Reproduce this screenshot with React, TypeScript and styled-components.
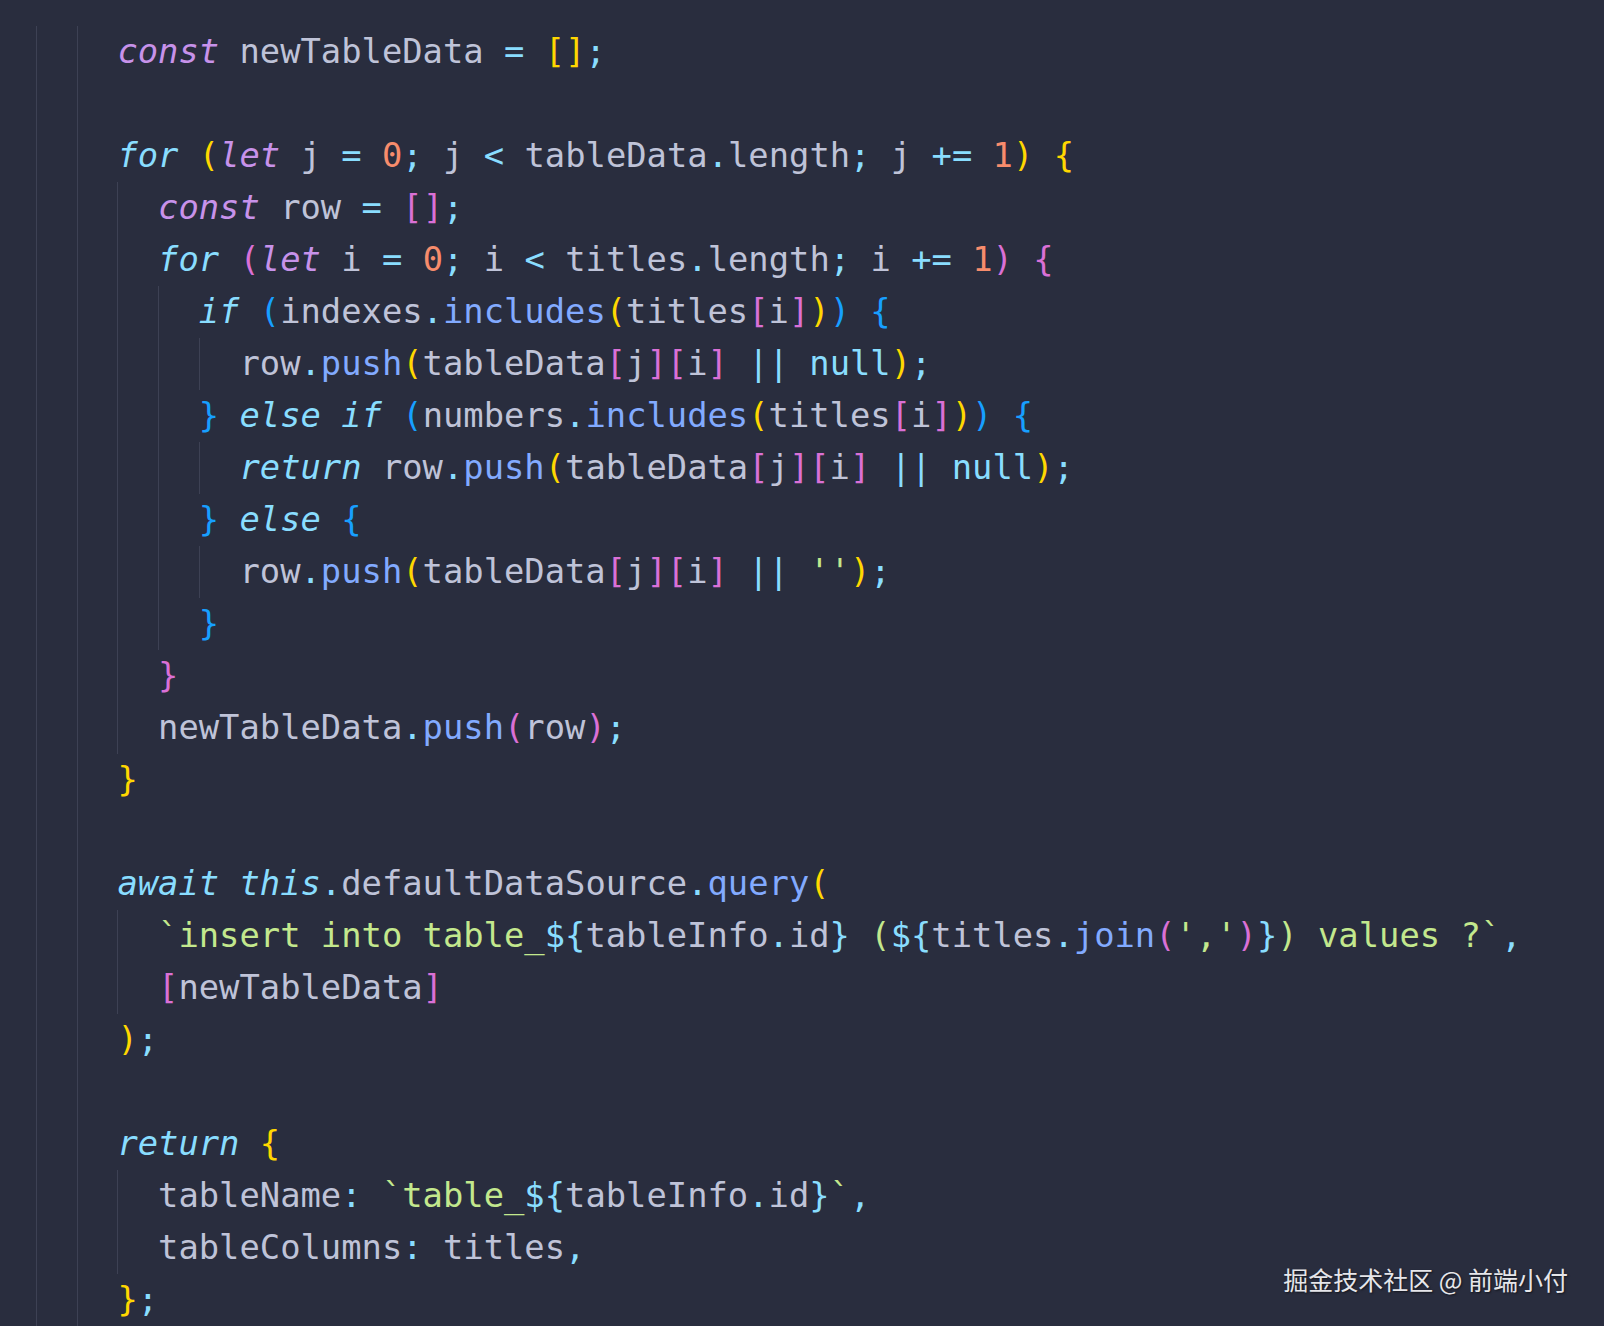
import React from "react";
import styled, { createGlobalStyle, css } from "styled-components";

const GlobalStyle = createGlobalStyle`
  html, body {
    margin: 0;
    padding: 0;
    background: #292d3e;
  }
  body {
    font-family: "DejaVu Sans Mono", "Liberation Mono", monospace;
  }
`;

type Kind = "k" | "c" | "i" | "o" | "n" | "f" | "s" | "y" | "p" | "b" | "u";

const palette: Record<Kind, string> = {
  k: "#c792ea",
  c: "#89ddff",
  i: "#bfc3d8",
  o: "#89ddff",
  n: "#f78c6c",
  f: "#82aaff",
  s: "#c3e88d",
  y: "#ffd700",
  p: "#da70d6",
  b: "#179fff",
  u: "#89ddff",
};

const Editor = styled.main`
  position: relative;
  box-sizing: border-box;
  height: 100vh;
  overflow: hidden;
  padding: 26px 0 0 36px;
  background: #292d3e;
  font-family: "DejaVu Sans Mono", "Liberation Mono", monospace;
  font-size: 33.8px;
`;

const Line = styled.div`
  display: flex;
  align-items: stretch;
  height: 52px;
  line-height: 52px;
  white-space: pre;
`;

const Guide = styled.span`
  flex: 0 0 auto;
  width: 2ch;
  border-left: 1px solid #3d4154;
  box-sizing: border-box;
`;

const Code = styled.span`
  color: #bfc3d8;
`;

const Token = styled.span<{ $kind: Kind }>`
  color: ${(p) => palette[p.$kind]};
  ${(p) =>
    (p.$kind === "k" || p.$kind === "c") &&
    css`
      font-style: italic;
    `}
`;

const Watermark = styled.div`
  position: absolute;
  right: 36px;
  bottom: 32px;
  font-family: "Noto Sans CJK SC", "Noto Sans", sans-serif;
  font-size: 25px;
  line-height: 30px;
  color: #e6e6ea;
  text-shadow: 1px 1px 2px rgba(0, 0, 0, 0.55);
`;

// [indent, tokens]  — tokens separated by "¦", "x:" prefix gives the kind
const source: [number, string][] = [
  [0, "k:const¦ ¦i:newTableData¦ ¦o:=¦ ¦y:[]¦o:;"],
  [0, ""],
  [0, "c:for¦ ¦y:(¦k:let¦ ¦i:j¦ ¦o:=¦ ¦n:0¦o:;¦ ¦i:j¦ ¦o:<¦ ¦i:tableData¦o:.¦i:length¦o:;¦ ¦i:j¦ ¦o:+=¦ ¦n:1¦y:)¦ ¦y:{"],
  [1, "k:const¦ ¦i:row¦ ¦o:=¦ ¦p:[]¦o:;"],
  [1, "c:for¦ ¦p:(¦k:let¦ ¦i:i¦ ¦o:=¦ ¦n:0¦o:;¦ ¦i:i¦ ¦o:<¦ ¦i:titles¦o:.¦i:length¦o:;¦ ¦i:i¦ ¦o:+=¦ ¦n:1¦p:)¦ ¦p:{"],
  [2, "c:if¦ ¦b:(¦i:indexes¦o:.¦f:includes¦y:(¦i:titles¦p:[¦i:i¦p:]¦y:)¦b:)¦ ¦b:{"],
  [3, "i:row¦o:.¦f:push¦y:(¦i:tableData¦p:[¦i:j¦p:][¦i:i¦p:]¦ ¦o:||¦ ¦u:null¦y:)¦o:;"],
  [2, "b:}¦ ¦c:else¦ ¦c:if¦ ¦b:(¦i:numbers¦o:.¦f:includes¦y:(¦i:titles¦p:[¦i:i¦p:]¦y:)¦b:)¦ ¦b:{"],
  [3, "c:return¦ ¦i:row¦o:.¦f:push¦y:(¦i:tableData¦p:[¦i:j¦p:][¦i:i¦p:]¦ ¦o:||¦ ¦u:null¦y:)¦o:;"],
  [2, "b:}¦ ¦c:else¦ ¦b:{"],
  [3, "i:row¦o:.¦f:push¦y:(¦i:tableData¦p:[¦i:j¦p:][¦i:i¦p:]¦ ¦o:||¦ ¦s:''¦y:)¦o:;"],
  [2, "b:}"],
  [1, "p:}"],
  [1, "i:newTableData¦o:.¦f:push¦p:(¦i:row¦p:)¦o:;"],
  [0, "y:}"],
  [0, ""],
  [0, "c:await¦ ¦c:this¦o:.¦i:defaultDataSource¦o:.¦f:query¦y:("],
  [1, "s:`insert into table_¦o:${¦i:tableInfo¦o:.¦i:id¦o:}¦s: (¦o:${¦i:titles¦o:.¦f:join¦p:(¦s:','¦p:)¦o:}¦s:) values ?`¦o:,"],
  [1, "p:[¦i:newTableData¦p:]"],
  [0, "y:)¦o:;"],
  [0, ""],
  [0, "c:return¦ ¦y:{"],
  [1, "i:tableName¦o::¦ ¦s:`table_¦o:${¦i:tableInfo¦o:.¦i:id¦o:}¦s:`¦o:,"],
  [1, "i:tableColumns¦o::¦ ¦i:titles¦o:,"],
  [0, "y:}¦o:;"],
];

const BASE_INDENT = 2;

function parse(line: string): { kind: Kind; text: string }[] {
  if (!line) return [];
  return line.split("¦").map((part) => {
    const m = /^([kciofnsypbu]):([\s\S]+)$/.exec(part);
    if (m) return { kind: m[1] as Kind, text: m[2] };
    return { kind: "i" as Kind, text: part };
  });
}

export default function App() {
  return (
    <>
      <GlobalStyle />
      <Editor>
        {source.map(([indent, text], li) => (
          <Line key={li}>
            {Array.from({ length: BASE_INDENT + indent }).map((_, gi) => (
              <Guide key={gi} />
            ))}
            <Code>
              {parse(text).map((t, ti) => (
                <Token key={ti} $kind={t.kind}>
                  {t.text}
                </Token>
              ))}
            </Code>
          </Line>
        ))}
        <Watermark>掘金技术社区 @ 前端小付</Watermark>
      </Editor>
    </>
  );
}
